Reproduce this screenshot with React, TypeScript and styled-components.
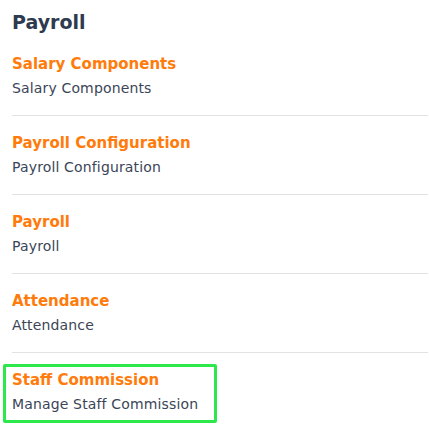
import styled, { createGlobalStyle } from "styled-components"

const GlobalStyle = createGlobalStyle`
  html, body {
    margin: 0;
    padding: 0;
    background: #fff;
  }
  body {
    font-family: "DejaVu Sans", "Open Sans", sans-serif;
  }
`

const Page = styled.div`
  padding: 8px 1px 0 12px;
`

const Heading = styled.h1`
  margin: 0 0 16px;
  font-size: 19px;
  line-height: 28px;
  font-weight: 700;
  color: #2e3a4f;
`

const List = styled.div`
  display: flex;
  flex-direction: column;
`

const Item = styled.div<{ $highlight?: boolean }>`
  padding: 15px 0 15px;
  border-bottom: 1px solid #e2e2e2;
  &:first-child {
    padding-top: 0;
  }

  ${props => props.$highlight && `
    align-self: flex-start;
    border: 3px solid #2ce84a;
    border-radius: 2px;
    margin: 11px 0 0 -9px;
    padding: 1px 16px 4px 6px;
  `}
`

const Title = styled.div`
  font-size: 15px;
  line-height: 24px;
  font-weight: 700;
  color: #ff7b0b;
`

const Subtitle = styled.div`
  font-size: 14px;
  letter-spacing: 0.15px;
  line-height: 24px;
  color: #3b4558;
`

const items = [
  { title: "Salary Components", sub: "Salary Components" },
  { title: "Payroll Configuration", sub: "Payroll Configuration" },
  { title: "Payroll", sub: "Payroll" },
  { title: "Attendance", sub: "Attendance" },
]

export default function App() {
  return (
    <>
      <GlobalStyle />
      <Page>
        <Heading>Payroll</Heading>
        <List>
          {items.map(item => (
            <Item key={item.title}>
              <Title>{item.title}</Title>
              <Subtitle>{item.sub}</Subtitle>
            </Item>
          ))}
          <Item $highlight>
            <Title>Staff Commission</Title>
            <Subtitle>Manage Staff Commission</Subtitle>
          </Item>
        </List>
      </Page>
    </>
  )
}
